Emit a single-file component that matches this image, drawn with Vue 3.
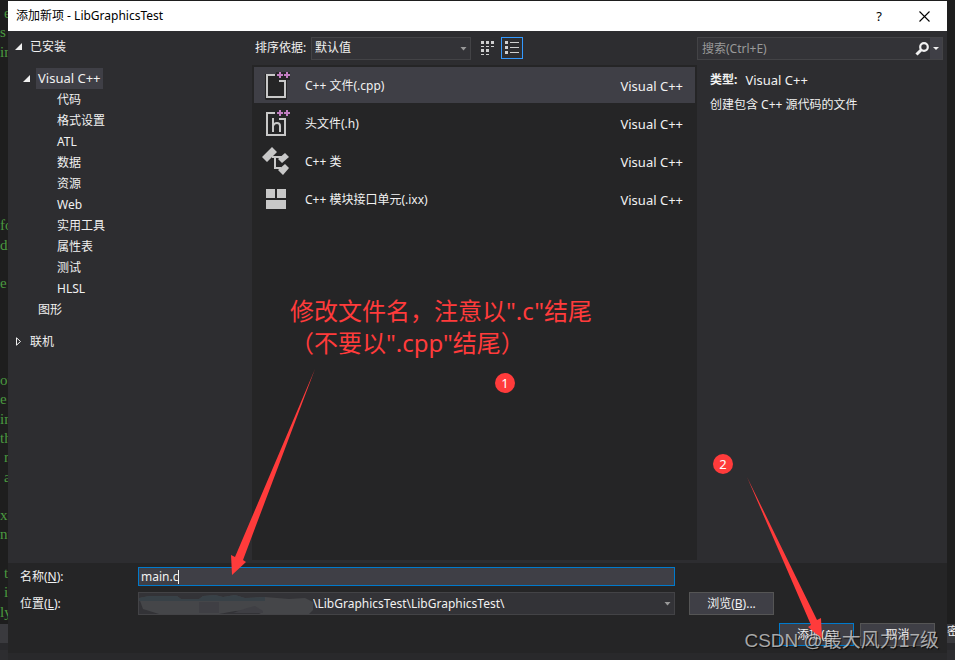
<script setup>
import { ref } from 'vue'

const codeLines = [
  { t: 'e', pad: true }, { t: 's' }, { t: 'in' }, {}, {}, {}, {}, {}, {}, {}, {},
  { t: 'fo' }, { t: 'di' }, {}, { t: 'e' }, {}, {}, {}, {},
  { t: 'ou' }, { t: 'e' }, { t: 'in' }, { t: 'th' }, { t: 'r', pad: true }, { t: 'a', pad: true }, {},
  { t: 'xc' }, { t: 'nt' }, {}, { t: 't', pad: true }, { t: 'i', pad: true }, { t: 'ly' },
]
const categories = ['代码', '格式设置', 'ATL', '数据', '资源', 'Web', '实用工具', '属性表', '测试', 'HLSL']
const templates = [
  { icon: 'cpp', name: 'C++ 文件(.cpp)' },
  { icon: 'header', name: '头文件(.h)' },
  { icon: 'class', name: 'C++ 类' },
  { icon: 'module', name: 'C++ 模块接口单元(.ixx)' },
]
const selected = ref(0)
const fileName = ref('main.c')
const query = ref('')
</script>

<template>
  <div class="desktop">
    <div class="edge">
      <div class="code">
        <span v-for="(line, i) in codeLines" :key="i" :class="{ pad: line.pad }">{{ line.t }}</span>
      </div>
      <div class="tab"></div>
      <div class="rule"></div>
    </div>

    <main class="dialog">
      <header class="titlebar">
        <h1>添加新项 - LibGraphicsTest</h1>
        <button class="win help" type="button" aria-label="帮助">?</button>
        <button class="win" type="button" aria-label="关闭">
          <svg width="11" height="11" viewBox="0 0 11 11"><path d="M.5.5l10 10M10.500.5l-10 10" stroke="#000" stroke-width="1.1" fill="none" /></svg>
        </button>
      </header>

      <div class="body">
        <nav class="tree">
          <div class="node root">
            <svg width="7" height="7" viewBox="0 0 7 7"><path d="M7 0v7H0z" fill="#f1f1f1" /></svg>
            <span>已安装</span>
          </div>
          <div class="node branch">
            <svg width="7" height="7" viewBox="0 0 7 7"><path d="M7 0v7H0z" fill="#f1f1f1" /></svg>
            <span class="current lang">Visual C++</span>
          </div>
          <div v-for="c in categories" :key="c" class="node leaf">{{ c }}</div>
          <div class="node graphic">图形</div>
          <div class="node root online">
            <svg width="7" height="9" viewBox="0 0 7 9"><path d="M1.500.8v7.400L5.500 4.500z" fill="none" stroke="#f1f1f1" /></svg>
            <span>联机</span>
          </div>
        </nav>

        <section class="center">
          <div class="toolbar">
            <label for="sort">排序依据:</label>
            <div class="combo sort">
              <select id="sort"><option>默认值</option></select>
              <svg class="arrow" width="7" height="4" viewBox="0 0 7 4"><path d="M.5 0h6l-3 3.500z" fill="#999" /></svg>
            </div>
            <button class="view" type="button" aria-label="小图标">
              <svg width="14" height="14" viewBox="0 0 14 14" fill="#d0d0d0">
                <path d="M0 0h3v3H0zM5 0h3v3H5zM10 0h3v3h-3zM0 5h3v1H0zM5 5h3v1H5zM10 5h3v1h-3zM0 8h3v3H0zM5 8h3v3H5zM0 13h3v1H0zM5 13h3v1H5z" />
              </svg>
            </button>
            <button class="view active" type="button" aria-label="列表">
              <svg width="14" height="14" viewBox="0 0 14 14" fill="#d0d0d0">
                <path d="M0 0h3v3H0zM0 5h3v3H0zM0 10h3v3H0zM5 1h9v1H5zM5 6h9v1H5zM5 11h9v1H5z" />
              </svg>
            </button>
          </div>

          <div class="list">
            <button
              v-for="(t, i) in templates" :key="t.icon" type="button"
              class="item" :class="{ on: selected === i }" @click="selected = i"
            >
              <svg class="glyph" width="30" height="30" viewBox="0 0 30 30">
                <template v-if="t.icon === 'cpp' || t.icon === 'header'">
                  <path v-if="t.icon === 'cpp'" d="M3 3h11V1h14v8h-3v19l-1 1H4l-1-1z" fill="#252526" />
                  <path d="M13 4H5v22h18V10h-6" fill="none" stroke="#c8c8c8" stroke-width="2" />
                  <path d="M17 1h2v2h2v2h-2v2h-2V5h-2V3h2zM24 1h2v2h2v2h-2v2h-2V5h-2V3h2z" fill="#c27ec2" />
                  <path v-if="t.icon === 'header'" d="M11 9v14M11 17q1-3 4-3 3 0 3 3v6" fill="none" stroke="#c8c8c8" stroke-width="2" />
                </template>
                <g v-else-if="t.icon === 'class'" fill="#c8c8c8">
                  <path d="M0 10L10 0l5 5-10 10zM16 12l7-6 4 4-7 6zM16 23l7-6 4 4-6 7z" />
                  <path d="M10 10h10M13 10v11h6" fill="none" stroke="#c8c8c8" stroke-width="2" />
                </g>
                <path v-else d="M4 4h9v9H4zM15 4h9v9h-9zM4 15h20v9H4z" fill="#c8c8c8" />
              </svg>
              <span class="name">{{ t.name }}</span>
              <span class="lang">Visual C++</span>
            </button>
          </div>
        </section>

        <aside class="details">
          <div class="search">
            <input v-model="query" type="text" placeholder="搜索(Ctrl+E)" aria-label="搜索" />
            <svg width="14" height="14" viewBox="0 0 14 14">
              <circle cx="9" cy="5" r="3.800" fill="none" stroke="#f1f1f1" stroke-width="2.200" />
              <path d="M6.300 7.700L1.500 12.500" stroke="#f1f1f1" stroke-width="3" />
            </svg>
            <button type="button" aria-label="搜索选项">
              <svg width="6" height="3" viewBox="0 0 6 3"><path d="M0 0h6L3 3z" fill="#f1f1f1" /></svg>
            </button>
          </div>
          <p class="kind"><b>类型:</b><span class="lang">Visual C++</span></p>
          <p>创建包含 C++ 源代码的文件</p>
        </aside>
      </div>

      <footer class="form">
        <div class="fields">
          <label for="name">名称(<u>N</u>):</label>
          <div class="namebox">
            <input id="name" v-model="fileName" type="text" />
            <i class="caret"></i>
          </div>
          <span></span>
          <label for="place">位置(<u>L</u>):</label>
          <div class="combo place">
            <select id="place"><option>\LibGraphicsTest\LibGraphicsTest\</option></select>
            <svg class="smudge" width="176" height="19" viewBox="0 0 176 19">
              <path d="M0 3l10-2h28l4 3h18l4-3 12-1 8 2 12-2 10 3 20-1 24 2 16-1 8 4v8l-4 4h-48l-8-4-18 1-16 3H20L4 14z" fill="#454649" />
              <path d="M0 3l10-2h28l4 3h18l4-3 12-1 8 2 12-2 10 3 20-1v4H0z" fill="#384147" />
              <path d="M60 7h20v11H60zM108 13l8-2 8 5v2h-30z" fill="#3f3f44" />
            </svg>
            <svg class="arrow" width="7" height="4" viewBox="0 0 7 4"><path d="M.5 0h6l-3 3.500z" fill="#999" /></svg>
          </div>
          <button class="push" type="button">浏览(<u>B</u>)...</button>
        </div>
        <div class="actions">
          <button class="push primary" type="button">添加(<u>A</u>)</button>
          <button class="push" type="button">取消</button>
        </div>
      </footer>

      <div class="note">
        <p>修改文件名，注意以".c"结尾</p>
        <p>（不要以".cpp"结尾）</p>
      </div>
      <span class="badge one">1</span>
      <span class="badge two">2</span>
      <svg class="pointer first" width="86" height="206" viewBox="0 0 86 206">
        <path d="M85 0L13 191l3 2-14 13L1 186l4 2z" fill="#ff3b3b" />
      </svg>
      <svg class="pointer second" width="78" height="164" viewBox="0 0 78 164">
        <path d="M1 0l70 143 4-2 1 21-14-12 3-2z" fill="#ff3b3b" />
      </svg>
    </main>

    <div class="edge right">
      <div class="code"></div>
      <div class="tab">密</div>
      <div class="rule"></div>
    </div>

    <div class="watermark">CSDN @最大风力17级</div>
  </div>
</template>

<style>
body {
  background: #1e1e1e;
}
</style>

<style scoped>
.desktop {
  position: relative;
  display: grid;
  grid-template-columns: 8px minmax(0, 1fr) 8px;
  min-height: 100vh;
  background: #1e1e1e;
  color: #f1f1f1;
  font: 12px/16px "Noto Sans", "Noto Sans CJK SC", sans-serif;
  overflow: hidden;
}
.desktop *, .desktop {
  box-sizing: border-box;
}
button, input, select {
  margin: 0;
  padding: 0;
  border: 0;
  border-radius: 0;
  background: none;
  color: inherit;
  font: inherit;
  outline: none;
}
p, h1 {
  margin: 0;
}
svg {
  display: block;
  flex: none;
}
.lang {
  font-size: 13px;
}
.edge {
  display: flex;
  flex-direction: column;
  overflow: hidden;
}
.code {
  flex: 1;
  display: grid;
  grid-auto-rows: minmax(0, 1fr);
  padding: 4px 0 2px;
  color: #4b9a40;
  font: 15px/19px "Liberation Serif", serif;
}
.code .pad {
  padding-left: 4px;
}
.tab {
  height: 19px;
  background: #3a3a3e;
  white-space: nowrap;
}
.rule {
  height: 17px;
  border-bottom: 10px solid #2d2d30;
  background: #29292c;
}
.dialog {
  position: relative;
  display: flex;
  flex-direction: column;
  margin-top: 1px;
  border-bottom: 7px solid #29292b;
  background: #252526;
}
.titlebar {
  display: flex;
  align-items: center;
  height: 30px;
  padding-left: 8px;
  background: #fff;
  color: #000;
}
.titlebar h1 {
  flex: 1;
  font-size: 12px;
  font-weight: 400;
}
.win {
  display: flex;
  align-items: center;
  justify-content: center;
  width: 46px;
  height: 30px;
}
.help {
  width: 44px;
  font-size: 13px;
}
.body {
  flex: 1;
  display: grid;
  grid-template-columns: 244px minmax(0, 1fr) 250px;
  background: #2d2d30;
}
.tree {
  padding-top: 5px;
}
.node {
  display: flex;
  align-items: center;
  height: 21px;
}
.root {
  gap: 8px;
  margin-bottom: 11px;
  padding-left: 7px;
}
.branch {
  gap: 6px;
  padding-left: 15px;
}
.current {
  padding: 2px;
  background: #3f3f46;
  line-height: 17px;
}
.leaf {
  padding-left: 49px;
}
.graphic {
  padding-left: 30px;
}
.online {
  margin-top: 11px;
}
.center {
  display: flex;
  flex-direction: column;
  padding-bottom: 3px;
}
.toolbar {
  display: flex;
  align-items: center;
  height: 34px;
  padding-left: 3px;
}
.toolbar label {
  width: 56px;
  white-space: nowrap;
}
.combo {
  position: relative;
  height: 23px;
}
.combo select {
  appearance: none;
  width: 100%;
  height: 100%;
  padding-left: 3px;
  border: 1px solid #434346;
  background: #333337;
}
.sort {
  width: 160px;
}
.arrow {
  position: absolute;
  top: 10px;
  right: 4px;
}
.view {
  display: flex;
  align-items: center;
  justify-content: center;
  width: 22px;
  height: 22px;
  margin-left: 6px;
  border: 1px solid transparent;
}
.view.active {
  margin-left: 2px;
  border-color: #3399ff;
}
.list {
  flex: 1;
  display: flex;
  flex-direction: column;
  gap: 2px;
  padding: 2px;
  background: #252526;
}
.item {
  display: flex;
  align-items: center;
  height: 36px;
  padding: 2px 12px 0 8px;
  text-align: left;
}
.item.on {
  background: #3f3f46;
}
.glyph {
  margin-right: 13px;
}
.name {
  flex: 1;
}
.search {
  display: flex;
  align-items: center;
  height: 23px;
  margin: 6px 4px 12px 0;
  border: 1px solid #434346;
  background: #333337;
}
.search input {
  flex: 1;
  min-width: 0;
  padding-left: 4px;
}
.search input::placeholder {
  color: #999;
  opacity: 1;
}
.search button {
  display: flex;
  align-items: center;
  justify-content: center;
  width: 12px;
  height: 21px;
  margin-left: 1px;
  background: #3f3f46;
}
.details p {
  padding-left: 13px;
}
.details .kind {
  display: flex;
  gap: 8px;
  margin-bottom: 9px;
}
.form {
  padding: 4px 12px 7px;
}
.fields {
  display: grid;
  grid-template-columns: 118px minmax(0, 1fr) 99px;
  row-gap: 6px;
  align-items: center;
  padding-right: 161px;
}
.fields .push {
  margin-left: 14px;
}
.namebox {
  position: relative;
}
.namebox input {
  display: block;
  width: 100%;
  height: 19px;
  padding-left: 2px;
  border: 1px solid #007acc;
  background: #3f3f46;
}
.caret {
  position: absolute;
  top: 3px;
  left: 40px;
  width: 1px;
  height: 14px;
  background: #f1f1f1;
}
.place select {
  padding-left: 174px;
}
.smudge {
  position: absolute;
  top: 3px;
  left: 1px;
}
.push {
  height: 23px;
  border: 1px solid #555;
  background: #3f3f46;
}
.actions {
  display: flex;
  justify-content: flex-end;
  gap: 6px;
  margin-top: 8px;
}
.actions .push {
  width: 75px;
}
.actions .primary {
  border-color: #007acc;
}
.note {
  position: absolute;
  top: 294px;
  left: 282px;
  color: #ff3b3b;
  font-size: 24px;
  line-height: 32px;
  white-space: nowrap;
}
.badge {
  position: absolute;
  width: 20px;
  height: 20px;
  border-radius: 50%;
  background: #ff3b3b;
  color: #fff;
  font-size: 13px;
  line-height: 20px;
  text-align: center;
}
.one {
  top: 372px;
  left: 487px;
}
.two {
  top: 453px;
  left: 705px;
}
.pointer {
  position: absolute;
  pointer-events: none;
}
.first {
  top: 368px;
  left: 222px;
}
.second {
  top: 476px;
  left: 738px;
}
.watermark {
  position: absolute;
  right: 16px;
  bottom: 7px;
  color: rgba(215, 215, 215, 0.75);
  font: 19px/24px "Liberation Sans", "Noto Sans CJK SC", sans-serif;
  text-shadow: 1px 1px 1px rgba(0, 0, 0, 0.7);
  pointer-events: none;
}
</style>
